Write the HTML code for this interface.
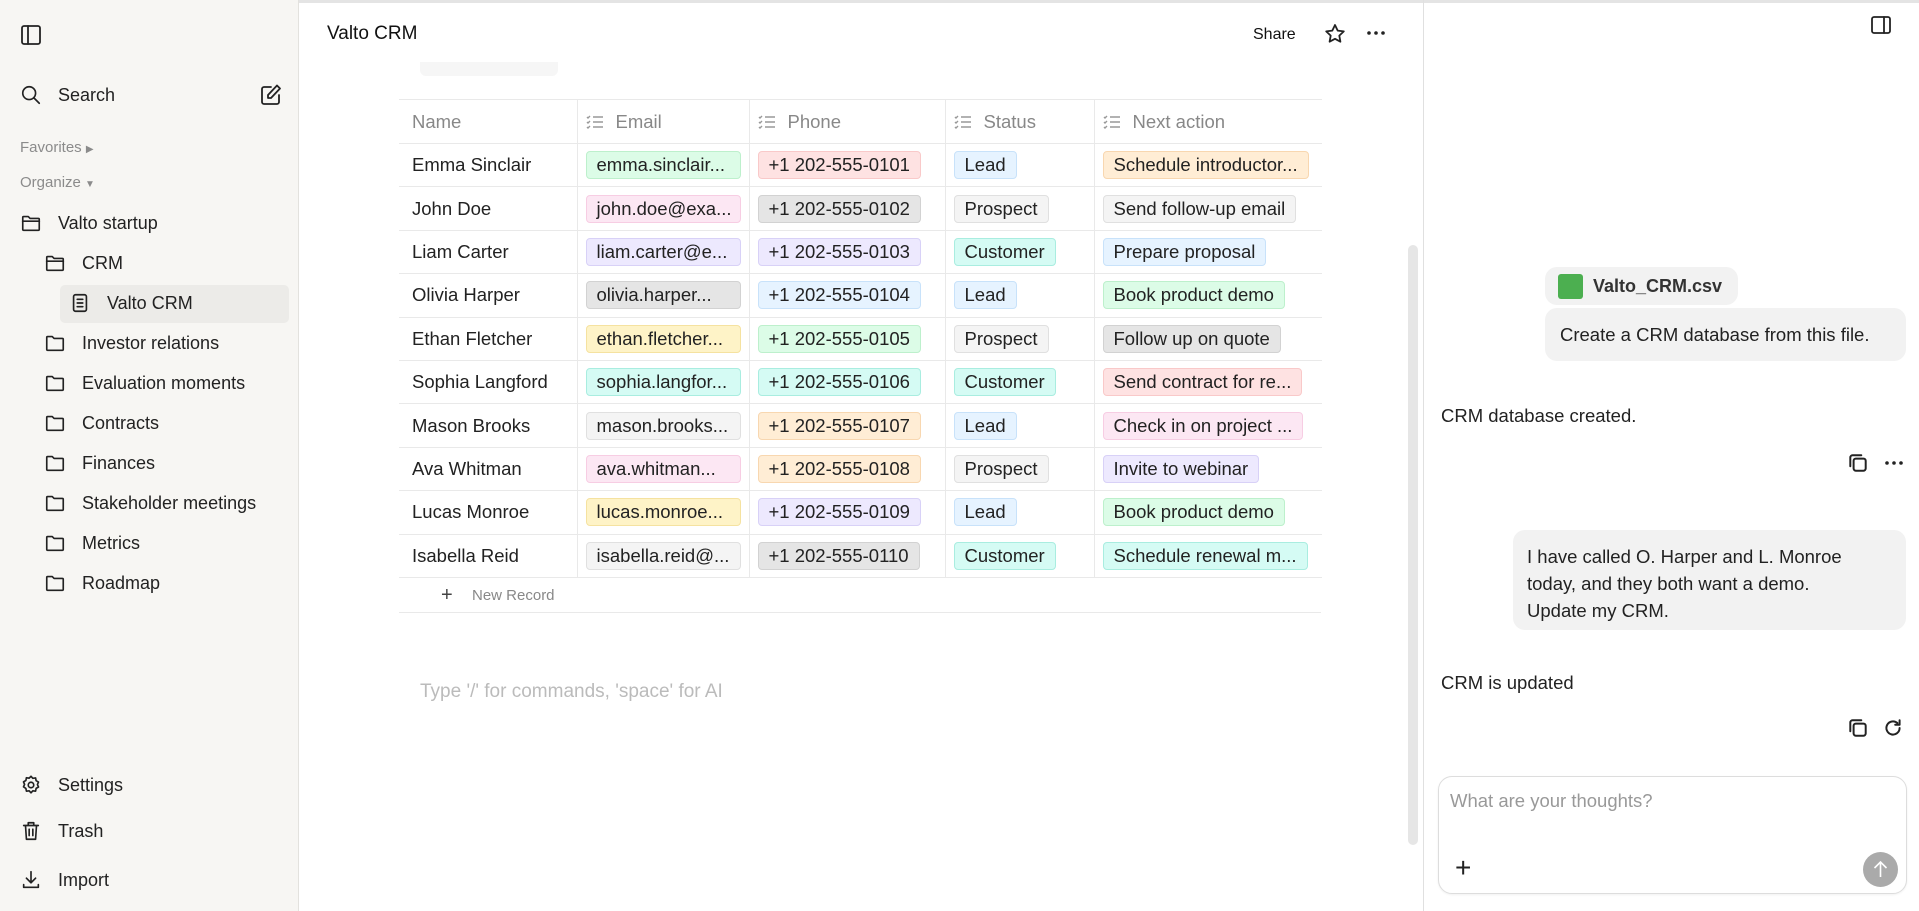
<!DOCTYPE html>
<html><head><meta charset="utf-8"><style>
*{box-sizing:border-box;margin:0;padding:0}
body{width:1919px;height:911px;overflow:hidden;font-family:"Liberation Sans",sans-serif;color:#222;background:#fff;position:relative}
.abs{position:absolute}
#side{left:0;top:0;width:299px;height:911px;background:#f7f6f3;border-right:1px solid #e3e2de}
.topline{left:0;top:0;width:1919px;height:3px;background:#e4e4e4}
.si{position:absolute;left:20px;display:flex;align-items:center;font-size:18px;color:#222}
.si svg{width:22px;height:22px;margin-right:16px;fill:none;stroke:#222;stroke-width:1.8;stroke-linecap:round;stroke-linejoin:round}
.sec{position:absolute;left:20px;font-size:15px;color:#8b8b8b}
table{border-collapse:collapse;position:absolute;left:399px;top:99px;font-size:18.5px}
td,th{border-bottom:1px solid #e9e9e9;border-left:1px solid #e9e9e9;height:43.4px;padding:0 8px;text-align:left;white-space:nowrap}
th{font-weight:normal;color:#888;height:44px;border-top:1px solid #e9e9e9}
th:first-child,td:first-child{border-left:none;padding-left:13px}
.c{display:inline-block;height:28px;line-height:26px;padding:0 10px;border-radius:4px;border:1px solid;font-size:18.5px;color:#222;vertical-align:middle}
.e{width:155px}
.g{background:#dcfce7;border-color:#bdf0cc}.r{background:#fee2e2;border-color:#f9c9c9}.p{background:#fce7f3;border-color:#f7cde3}.v{background:#ede9fe;border-color:#d8d1f7}.k{background:#e5e5e5;border-color:#d2d2d2}.b{background:#e6f3ff;border-color:#c8e2fa}.y{background:#fef3c7;border-color:#f5e2a0}.t{background:#d5fbf4;border-color:#a9ede0}.o{background:#ffedd5;border-color:#f8d7b0}.l{background:#f4f4f4;border-color:#e0e0e0}
.hi{display:inline-block;width:18px;height:14px;margin-right:12px;vertical-align:-1px}
.bub{background:#f2f2f2;border-radius:12px;font-size:18px;color:#222}
.ic{fill:none;stroke:#222;stroke-width:1.8;stroke-linecap:round;stroke-linejoin:round}
</style></head><body>
<div class="abs topline"></div>
<div id="side" class="abs">
<svg class="abs ic" style="left:19px;top:23px" width="24" height="24" viewBox="0 0 24 24"><rect x="3" y="3" width="18" height="18" rx="2"/><line x1="9" y1="3" x2="9" y2="21"/></svg>
<div class="si" style="top:84px"><svg viewBox="0 0 24 24"><circle cx="10" cy="10" r="7"/><line x1="15" y1="15" x2="21" y2="21"/></svg>Search</div>
<svg class="abs ic" style="left:259px;top:83px" width="24" height="24" viewBox="0 0 24 24"><path d="M12 4H5a2 2 0 0 0-2 2v13a2 2 0 0 0 2 2h13a2 2 0 0 0 2-2v-7"/><path d="M18 2.5l3 3L12 15H9v-3z"/></svg>
<div class="sec" style="top:139px">Favorites <span style="font-size:10px">▶</span></div>
<div class="sec" style="top:174px">Organize <span style="font-size:10px">▼</span></div>
<div class="si" style="top:212px"><svg viewBox="0 0 24 24"><path d="M3 6a1 1 0 0 1 1-1h5l2 2h9a1 1 0 0 1 1 1v11a1 1 0 0 1-1 1H4a1 1 0 0 1-1-1z"/><line x1="3" y1="10" x2="21" y2="10"/></svg>Valto startup</div>
<div class="si" style="top:252px;left:44px"><svg viewBox="0 0 24 24"><path d="M3 6a1 1 0 0 1 1-1h5l2 2h9a1 1 0 0 1 1 1v11a1 1 0 0 1-1 1H4a1 1 0 0 1-1-1z"/><line x1="3" y1="10" x2="21" y2="10"/></svg>CRM</div>
<div class="abs" style="left:60px;top:285px;width:229px;height:38px;background:#ecebe8;border-radius:5px"></div>
<div class="si" style="top:292px;left:69px"><svg viewBox="0 0 24 24"><rect x="5" y="3" width="14" height="18" rx="2"/><line x1="9" y1="8" x2="15" y2="8"/><line x1="9" y1="12" x2="15" y2="12"/><line x1="9" y1="16" x2="15" y2="16"/></svg>Valto CRM</div>
<div class="si" style="top:332px;left:44px"><svg viewBox="0 0 24 24"><path d="M3 6a1 1 0 0 1 1-1h5l2 2h9a1 1 0 0 1 1 1v11a1 1 0 0 1-1 1H4a1 1 0 0 1-1-1z"/></svg>Investor relations</div>
<div class="si" style="top:372px;left:44px"><svg viewBox="0 0 24 24"><path d="M3 6a1 1 0 0 1 1-1h5l2 2h9a1 1 0 0 1 1 1v11a1 1 0 0 1-1 1H4a1 1 0 0 1-1-1z"/></svg>Evaluation moments</div>
<div class="si" style="top:412px;left:44px"><svg viewBox="0 0 24 24"><path d="M3 6a1 1 0 0 1 1-1h5l2 2h9a1 1 0 0 1 1 1v11a1 1 0 0 1-1 1H4a1 1 0 0 1-1-1z"/></svg>Contracts</div>
<div class="si" style="top:452px;left:44px"><svg viewBox="0 0 24 24"><path d="M3 6a1 1 0 0 1 1-1h5l2 2h9a1 1 0 0 1 1 1v11a1 1 0 0 1-1 1H4a1 1 0 0 1-1-1z"/></svg>Finances</div>
<div class="si" style="top:492px;left:44px"><svg viewBox="0 0 24 24"><path d="M3 6a1 1 0 0 1 1-1h5l2 2h9a1 1 0 0 1 1 1v11a1 1 0 0 1-1 1H4a1 1 0 0 1-1-1z"/></svg>Stakeholder meetings</div>
<div class="si" style="top:532px;left:44px"><svg viewBox="0 0 24 24"><path d="M3 6a1 1 0 0 1 1-1h5l2 2h9a1 1 0 0 1 1 1v11a1 1 0 0 1-1 1H4a1 1 0 0 1-1-1z"/></svg>Metrics</div>
<div class="si" style="top:572px;left:44px"><svg viewBox="0 0 24 24"><path d="M3 6a1 1 0 0 1 1-1h5l2 2h9a1 1 0 0 1 1 1v11a1 1 0 0 1-1 1H4a1 1 0 0 1-1-1z"/></svg>Roadmap</div>
<div class="si" style="top:774px"><svg viewBox="0 0 24 24"><circle cx="12" cy="12" r="3"/><path d="M12 2.5l2 2.2 3-.4.6 3 2.6 1.5-1.2 2.7 1.2 2.7-2.6 1.5-.6 3-3-.4-2 2.2-2-2.2-3 .4-.6-3L3.8 14l1.2-2.7L3.8 8.6l2.6-1.5.6-3 3 .4z"/></svg>Settings</div>
<div class="si" style="top:820px"><svg viewBox="0 0 24 24"><path d="M4 6h16M9 6V3h6v3M6 6l1 15h10l1-15M10 10v7M14 10v7"/></svg>Trash</div>
<div class="si" style="top:869px"><svg viewBox="0 0 24 24"><path d="M12 3v12M7 10l5 5 5-5M4 17v3h16v-3"/></svg>Import</div>
</div>

<div class="abs" style="left:327px;top:23px;font-size:19px;color:#111">Valto CRM</div>
<div class="abs" style="left:1253px;top:26px;font-size:16px;color:#111">Share</div>
<svg class="abs ic" style="left:1323px;top:22px" width="24" height="24" viewBox="0 0 24 24"><path d="M12 3l2.7 5.6 6.1.8-4.5 4.2 1.1 6.1L12 16.8l-5.4 2.9 1.1-6.1L3.2 9.4l6.1-.8z"/></svg>
<svg class="abs" style="left:1366px;top:28px" width="20" height="10" viewBox="0 0 20 10"><circle cx="3" cy="5" r="1.8" fill="#222"/><circle cx="10" cy="5" r="1.8" fill="#222"/><circle cx="17" cy="5" r="1.8" fill="#222"/></svg>
<div class="abs" style="left:420px;top:62px;width:138px;height:14px;background:#f6f6f6;border-radius:0 0 6px 6px"></div>

<table>
<colgroup><col style="width:178px"><col style="width:170px"><col style="width:196px"><col style="width:149px"><col style="width:228px"></colgroup>
<tr><th>Name</th><th><svg class="hi" viewBox="0 0 18 14"><path d="M1 2l1 1 2-2M1 7l1 1 2-2M1 12l1 1 2-2M7 2h10M7 7h10M7 12h10" stroke="#999" stroke-width="1.4" fill="none"/></svg>Email</th><th><svg class="hi" viewBox="0 0 18 14"><path d="M1 2l1 1 2-2M1 7l1 1 2-2M1 12l1 1 2-2M7 2h10M7 7h10M7 12h10" stroke="#999" stroke-width="1.4" fill="none"/></svg>Phone</th><th><svg class="hi" viewBox="0 0 18 14"><path d="M1 2l1 1 2-2M1 7l1 1 2-2M1 12l1 1 2-2M7 2h10M7 7h10M7 12h10" stroke="#999" stroke-width="1.4" fill="none"/></svg>Status</th><th><svg class="hi" viewBox="0 0 18 14"><path d="M1 2l1 1 2-2M1 7l1 1 2-2M1 12l1 1 2-2M7 2h10M7 7h10M7 12h10" stroke="#999" stroke-width="1.4" fill="none"/></svg>Next action</th></tr>
<tr><td>Emma Sinclair</td><td><span class="c e g">emma.sinclair...</span></td><td><span class="c r">+1 202-555-0101</span></td><td><span class="c b">Lead</span></td><td><span class="c o">Schedule introductor...</span></td></tr>
<tr><td>John Doe</td><td><span class="c e p">john.doe@exa...</span></td><td><span class="c k">+1 202-555-0102</span></td><td><span class="c l">Prospect</span></td><td><span class="c l">Send follow-up email</span></td></tr>
<tr><td>Liam Carter</td><td><span class="c e v">liam.carter@e...</span></td><td><span class="c v">+1 202-555-0103</span></td><td><span class="c t">Customer</span></td><td><span class="c b">Prepare proposal</span></td></tr>
<tr><td>Olivia Harper</td><td><span class="c e k">olivia.harper...</span></td><td><span class="c b">+1 202-555-0104</span></td><td><span class="c b">Lead</span></td><td><span class="c g">Book product demo</span></td></tr>
<tr><td>Ethan Fletcher</td><td><span class="c e y">ethan.fletcher...</span></td><td><span class="c g">+1 202-555-0105</span></td><td><span class="c l">Prospect</span></td><td><span class="c k">Follow up on quote</span></td></tr>
<tr><td>Sophia Langford</td><td><span class="c e t">sophia.langfor...</span></td><td><span class="c t">+1 202-555-0106</span></td><td><span class="c t">Customer</span></td><td><span class="c r">Send contract for re...</span></td></tr>
<tr><td>Mason Brooks</td><td><span class="c e l">mason.brooks...</span></td><td><span class="c o">+1 202-555-0107</span></td><td><span class="c b">Lead</span></td><td><span class="c p">Check in on project ...</span></td></tr>
<tr><td>Ava Whitman</td><td><span class="c e p">ava.whitman...</span></td><td><span class="c o">+1 202-555-0108</span></td><td><span class="c l">Prospect</span></td><td><span class="c v">Invite to webinar</span></td></tr>
<tr><td>Lucas Monroe</td><td><span class="c e y">lucas.monroe...</span></td><td><span class="c v">+1 202-555-0109</span></td><td><span class="c b">Lead</span></td><td><span class="c g">Book product demo</span></td></tr>
<tr><td>Isabella Reid</td><td><span class="c e l">isabella.reid@...</span></td><td><span class="c k">+1 202-555-0110</span></td><td><span class="c t">Customer</span></td><td><span class="c t">Schedule renewal m...</span></td></tr>
</table>
<div class="abs" style="left:441px;top:584px;font-size:20px;color:#444">+</div>
<div class="abs" style="left:472px;top:587px;font-size:15px;color:#888">New Record</div>
<div class="abs" style="left:399px;top:612px;width:922px;height:1px;background:#e9e9e9"></div>
<div class="abs" style="left:420px;top:681px;font-size:19px;color:#bbb">Type '/' for commands, 'space' for AI</div>
<div class="abs" style="left:1408px;top:245px;width:10px;height:600px;background:#e6e6e6;border-radius:5px"></div>
<div class="abs" style="left:1423px;top:0;width:1px;height:911px;background:#e0e0e0"></div>

<svg class="abs ic" style="left:1869px;top:13px" width="24" height="24" viewBox="0 0 24 24"><rect x="3" y="4" width="18" height="16" rx="2"/><line x1="15" y1="4" x2="15" y2="20"/></svg>
<div class="abs bub" style="left:1545px;top:267px;width:193px;height:38px;display:flex;align-items:center;padding-left:13px;font-weight:bold;font-size:18px;color:#333"><span style="width:25px;height:25px;background:#4caf50;border-radius:3px;margin-right:10px"></span>Valto_CRM.csv</div>
<div class="abs bub" style="left:1545px;top:308px;width:361px;height:53px;line-height:53px;padding-left:15px;font-size:18.5px">Create a CRM database from this file.</div>
<div class="abs" style="left:1441px;top:405px;font-size:18.5px">CRM database created.</div>
<svg class="abs ic" style="left:1847px;top:452px" width="22" height="22" viewBox="0 0 20 20"><rect x="6" y="6" width="11" height="11" rx="2"/><path d="M13 3H5a2 2 0 0 0-2 2v8"/></svg>
<svg class="abs" style="left:1884px;top:458px" width="20" height="10" viewBox="0 0 20 10"><circle cx="3" cy="5" r="1.8" fill="#222"/><circle cx="10" cy="5" r="1.8" fill="#222"/><circle cx="17" cy="5" r="1.8" fill="#222"/></svg>
<div class="abs bub" style="left:1513px;top:530px;width:393px;height:100px;padding:13px 14px;line-height:27px;font-size:18.5px">I have called O. Harper and L. Monroe<br>today, and they both want a demo.<br>Update my CRM.</div>
<div class="abs" style="left:1441px;top:672px;font-size:18.5px">CRM is updated</div>
<svg class="abs ic" style="left:1847px;top:717px" width="22" height="22" viewBox="0 0 20 20"><rect x="6" y="6" width="11" height="11" rx="2"/><path d="M13 3H5a2 2 0 0 0-2 2v8"/></svg>
<svg class="abs ic" style="left:1882px;top:717px" width="22" height="22" viewBox="0 0 20 20"><path d="M16 10a6 6 0 1 1-2-4.5M16 3v4h-4"/></svg>
<div class="abs" style="left:1438px;top:776px;width:469px;height:118px;border:1px solid #ddd;border-radius:14px;box-shadow:0 1px 2px rgba(0,0,0,.06)"></div>
<div class="abs" style="left:1450px;top:790px;font-size:18.5px;color:#999">What are your thoughts?</div>
<div class="abs" style="left:1455px;top:853px;font-size:28px;font-weight:300;color:#222;line-height:30px">+</div>
<div class="abs" style="left:1863px;top:852px;width:35px;height:35px;border-radius:50%;background:#aaa"><svg width="35" height="35" viewBox="0 0 35 35"><path d="M17.5 25V10M11.5 16l6-6 6 6" stroke="#fff" stroke-width="1.6" fill="none"/></svg></div>
</body></html>
